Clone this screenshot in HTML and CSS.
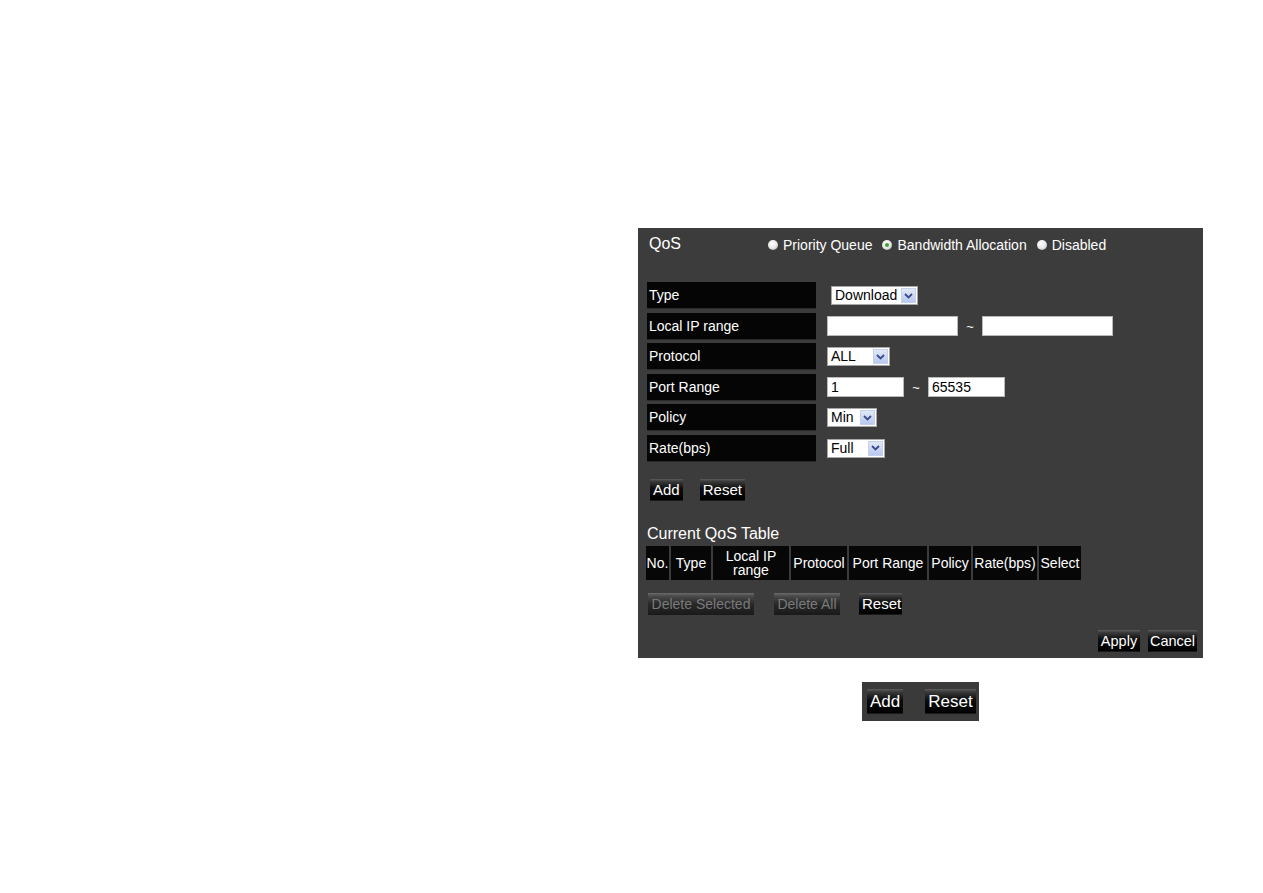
FILE: index.html
```html
<!DOCTYPE html>
<html>
<head>
<meta charset="utf-8">
<link rel="stylesheet" href="styles.css">
</head>
<body>
<div class="page">
  <div class="panel">
    <div class="head">
      <div class="title">QoS</div>
      <div class="radios">
        <span class="radio"><span class="dot"></span>Priority Queue</span>
        <span class="radio"><span class="dot on"></span>Bandwidth Allocation</span>
        <span class="radio"><span class="dot"></span>Disabled</span>
      </div>
    </div>

    <div class="form">
      <div class="row">
        <div class="lbl">Type</div>
        <div class="ctl ctl-type">
          <span class="sel w87"><span class="val">Download</span><span class="arr"><svg width="9" height="6" viewBox="0 0 9 6"><path d="M1 1l3.5 3.5L8 1" fill="none" stroke="#3a4a8a" stroke-width="1.8"/></svg></span></span>
        </div>
      </div>
      <div class="row">
        <div class="lbl">Local IP range</div>
        <div class="ctl">
          <span class="inp w131"></span><span class="tilde">~</span><span class="inp w131"></span>
        </div>
      </div>
      <div class="row">
        <div class="lbl">Protocol</div>
        <div class="ctl">
          <span class="sel w63"><span class="val">ALL</span><span class="arr"><svg width="9" height="6" viewBox="0 0 9 6"><path d="M1 1l3.5 3.5L8 1" fill="none" stroke="#3a4a8a" stroke-width="1.8"/></svg></span></span>
        </div>
      </div>
      <div class="row">
        <div class="lbl">Port Range</div>
        <div class="ctl">
          <span class="inp w77">1</span><span class="tilde">~</span><span class="inp w77">65535</span>
        </div>
      </div>
      <div class="row">
        <div class="lbl">Policy</div>
        <div class="ctl">
          <span class="sel w50"><span class="val">Min</span><span class="arr"><svg width="9" height="6" viewBox="0 0 9 6"><path d="M1 1l3.5 3.5L8 1" fill="none" stroke="#3a4a8a" stroke-width="1.8"/></svg></span></span>
        </div>
      </div>
      <div class="row">
        <div class="lbl">Rate(bps)</div>
        <div class="ctl">
          <span class="sel w58"><span class="val">Full</span><span class="arr"><svg width="9" height="6" viewBox="0 0 9 6"><path d="M1 1l3.5 3.5L8 1" fill="none" stroke="#3a4a8a" stroke-width="1.8"/></svg></span></span>
        </div>
      </div>
    </div>

    <div class="btns btns-add">
      <span class="btn">Add</span>
      <span class="btn">Reset</span>
    </div>

    <div class="subtitle">Current QoS Table</div>
    <div class="thead">
      <div class="th c-no">No.</div>
      <div class="th c-type">Type</div>
      <div class="th c-ip">Local IP<br>range</div>
      <div class="th c-proto">Protocol</div>
      <div class="th c-port">Port Range</div>
      <div class="th c-pol">Policy</div>
      <div class="th c-rate">Rate(bps)</div>
      <div class="th c-sel">Select</div>
    </div>

    <div class="btns btns-del">
      <span class="btn dis b-delsel">Delete Selected</span>
      <span class="btn dis b-delall">Delete All</span>
      <span class="btn b-reset">Reset</span>
    </div>

    <div class="footer">
      <span class="btn b-apply">Apply</span>
      <span class="btn b-cancel">Cancel</span>
    </div>
  </div>

  <div class="mini">
    <span class="btn big">Add</span>
    <span class="btn big">Reset</span>
  </div>
</div>
</body>
</html>
```

FILE: styles.css
```css
html, body {
  margin: 0;
  padding: 0;
  background: #ffffff;
}

body {
  font-family: "Liberation Sans", Arial, sans-serif;
  color: #ffffff;
}

.page {
  padding: 228px 0 0 638px;
}

.panel {
  width: 565px;
  height: 430px;
  background: #3c3c3c;
  box-sizing: border-box;
  padding: 6px 0 0 0;
}

.head {
  display: flex;
  align-items: flex-start;
  height: 48px;
}

.title {
  font-size: 16px;
  margin-left: 11px;
  width: 119px;
  line-height: 20px;
}

.radios {
  display: flex;
  font-size: 14px;
  line-height: 20px;
  padding-top: 1px;
}

.radio {
  display: inline-flex;
  align-items: center;
  margin-right: 10px;
}

.dot {
  width: 10px;
  height: 10px;
  border-radius: 50%;
  background: radial-gradient(circle at 40% 35%, #ffffff 0%, #e8e8e8 50%, #a9a9a9 100%);
  margin-right: 5px;
  box-sizing: border-box;
  position: relative;
}

.dot.on::after {
  content: "";
  position: absolute;
  left: 3px;
  top: 3px;
  width: 4px;
  height: 4px;
  border-radius: 50%;
  background: #3aa537;
}

.form {
  margin-left: 9px;
  display: flex;
  flex-direction: column;
  gap: 3.5px;
}

.row {
  display: flex;
  align-items: center;
  height: 27px;
}

.lbl {
  width: 169px;
  height: 27px;
  background: #050505;
  font-size: 14px;
  line-height: 27px;
  padding-left: 2px;
  box-sizing: border-box;
  border-bottom: 1px solid #2a2a2a;
}

.ctl {
  display: flex;
  align-items: center;
  margin-left: 11px;
}

.ctl-type {
  margin-left: 15px;
}

.inp {
  display: inline-block;
  height: 20px;
  background: #ffffff;
  border: 1px solid #b9b9b9;
  box-sizing: border-box;
  color: #000;
  font-size: 14px;
  line-height: 18px;
  padding-left: 3px;
}

.w131 { width: 131px; }
.w77 { width: 77px; }

.tilde {
  color: #ffffff;
  font-size: 13px;
  width: 24px;
  text-align: center;
}

.sel {
  display: inline-flex;
  align-items: center;
  justify-content: space-between;
  height: 19px;
  background: #ffffff;
  border: 1px solid #a7a7a7;
  box-sizing: border-box;
  color: #000;
  font-size: 14px;
  padding: 0 1px 0 3px;
}

.sel .val { line-height: 17px; }

.arr {
  display: inline-flex;
  align-items: center;
  justify-content: center;
  width: 15px;
  height: 15px;
  background: linear-gradient(#e1e9f8, #b9c9ee);
  border: 1px solid #c3d0ee;
  box-sizing: border-box;
}

.w87 { width: 87px; }
.w63 { width: 63px; }
.w50 { width: 50px; }
.w58 { width: 58px; }

.btns {
  display: flex;
  align-items: center;
}

.btn {
  display: inline-block;
  height: 22px;
  line-height: 22px;
  padding: 0 3px;
  font-size: 15px;
  color: #ffffff;
  background: linear-gradient(#5c5c5c 0%, #3a3a3a 12%, #0d0d0d 45%, #000 100%);
  border-bottom: 1px solid #1a1a1a;
  box-sizing: border-box;
}

.btns-add {
  margin: 17px 0 0 12px;
  gap: 17px;
}

.subtitle {
  font-size: 16px;
  margin: 23px 0 0 9px;
  line-height: 20px;
}

.thead {
  display: flex;
  margin: 2px 0 0 8px;
  gap: 2px;
}

.th {
  height: 34px;
  background: #070707;
  font-size: 14px;
  line-height: 14px;
  display: flex;
  align-items: center;
  justify-content: center;
  text-align: center;
  box-sizing: border-box;
}

.c-no { width: 23px; }
.c-type { width: 40px; }
.c-ip { width: 76px; }
.c-proto { width: 56px; }
.c-port { width: 78px; }
.c-pol { width: 42px; }
.c-rate { width: 64px; }
.c-sel { width: 42px; }

.btns-del {
  margin: 13px 0 0 10px;
}

.btn.dis {
  color: #7a7a7a;
  background: linear-gradient(#6a6a6a 0%, #4a4a4a 15%, #2a2a2a 50%, #1b1b1b 100%);
  font-size: 14px;
}

.b-delsel { width: 106px; text-align: center; }
.b-delall { width: 66px; margin-left: 20px; text-align: center; }
.b-reset { width: 43px; margin-left: 19px; text-align: center; }

.footer {
  display: flex;
  justify-content: flex-end;
  gap: 8px;
  margin: 15px 6px 0 0;
}

.b-apply { width: 42px; text-align: center; padding: 0; font-size: 14.5px; }
.b-cancel { width: 49px; text-align: center; padding: 0; font-size: 14.5px; }

.mini {
  width: 117px;
  height: 39px;
  margin: 24px 0 0 224px;
  background: #3a3a3a;
  display: flex;
  align-items: center;
  gap: 22px;
  padding-left: 5px;
  box-sizing: border-box;
}

.btn.big {
  height: 25px;
  line-height: 25px;
  font-size: 17px;
}
```
